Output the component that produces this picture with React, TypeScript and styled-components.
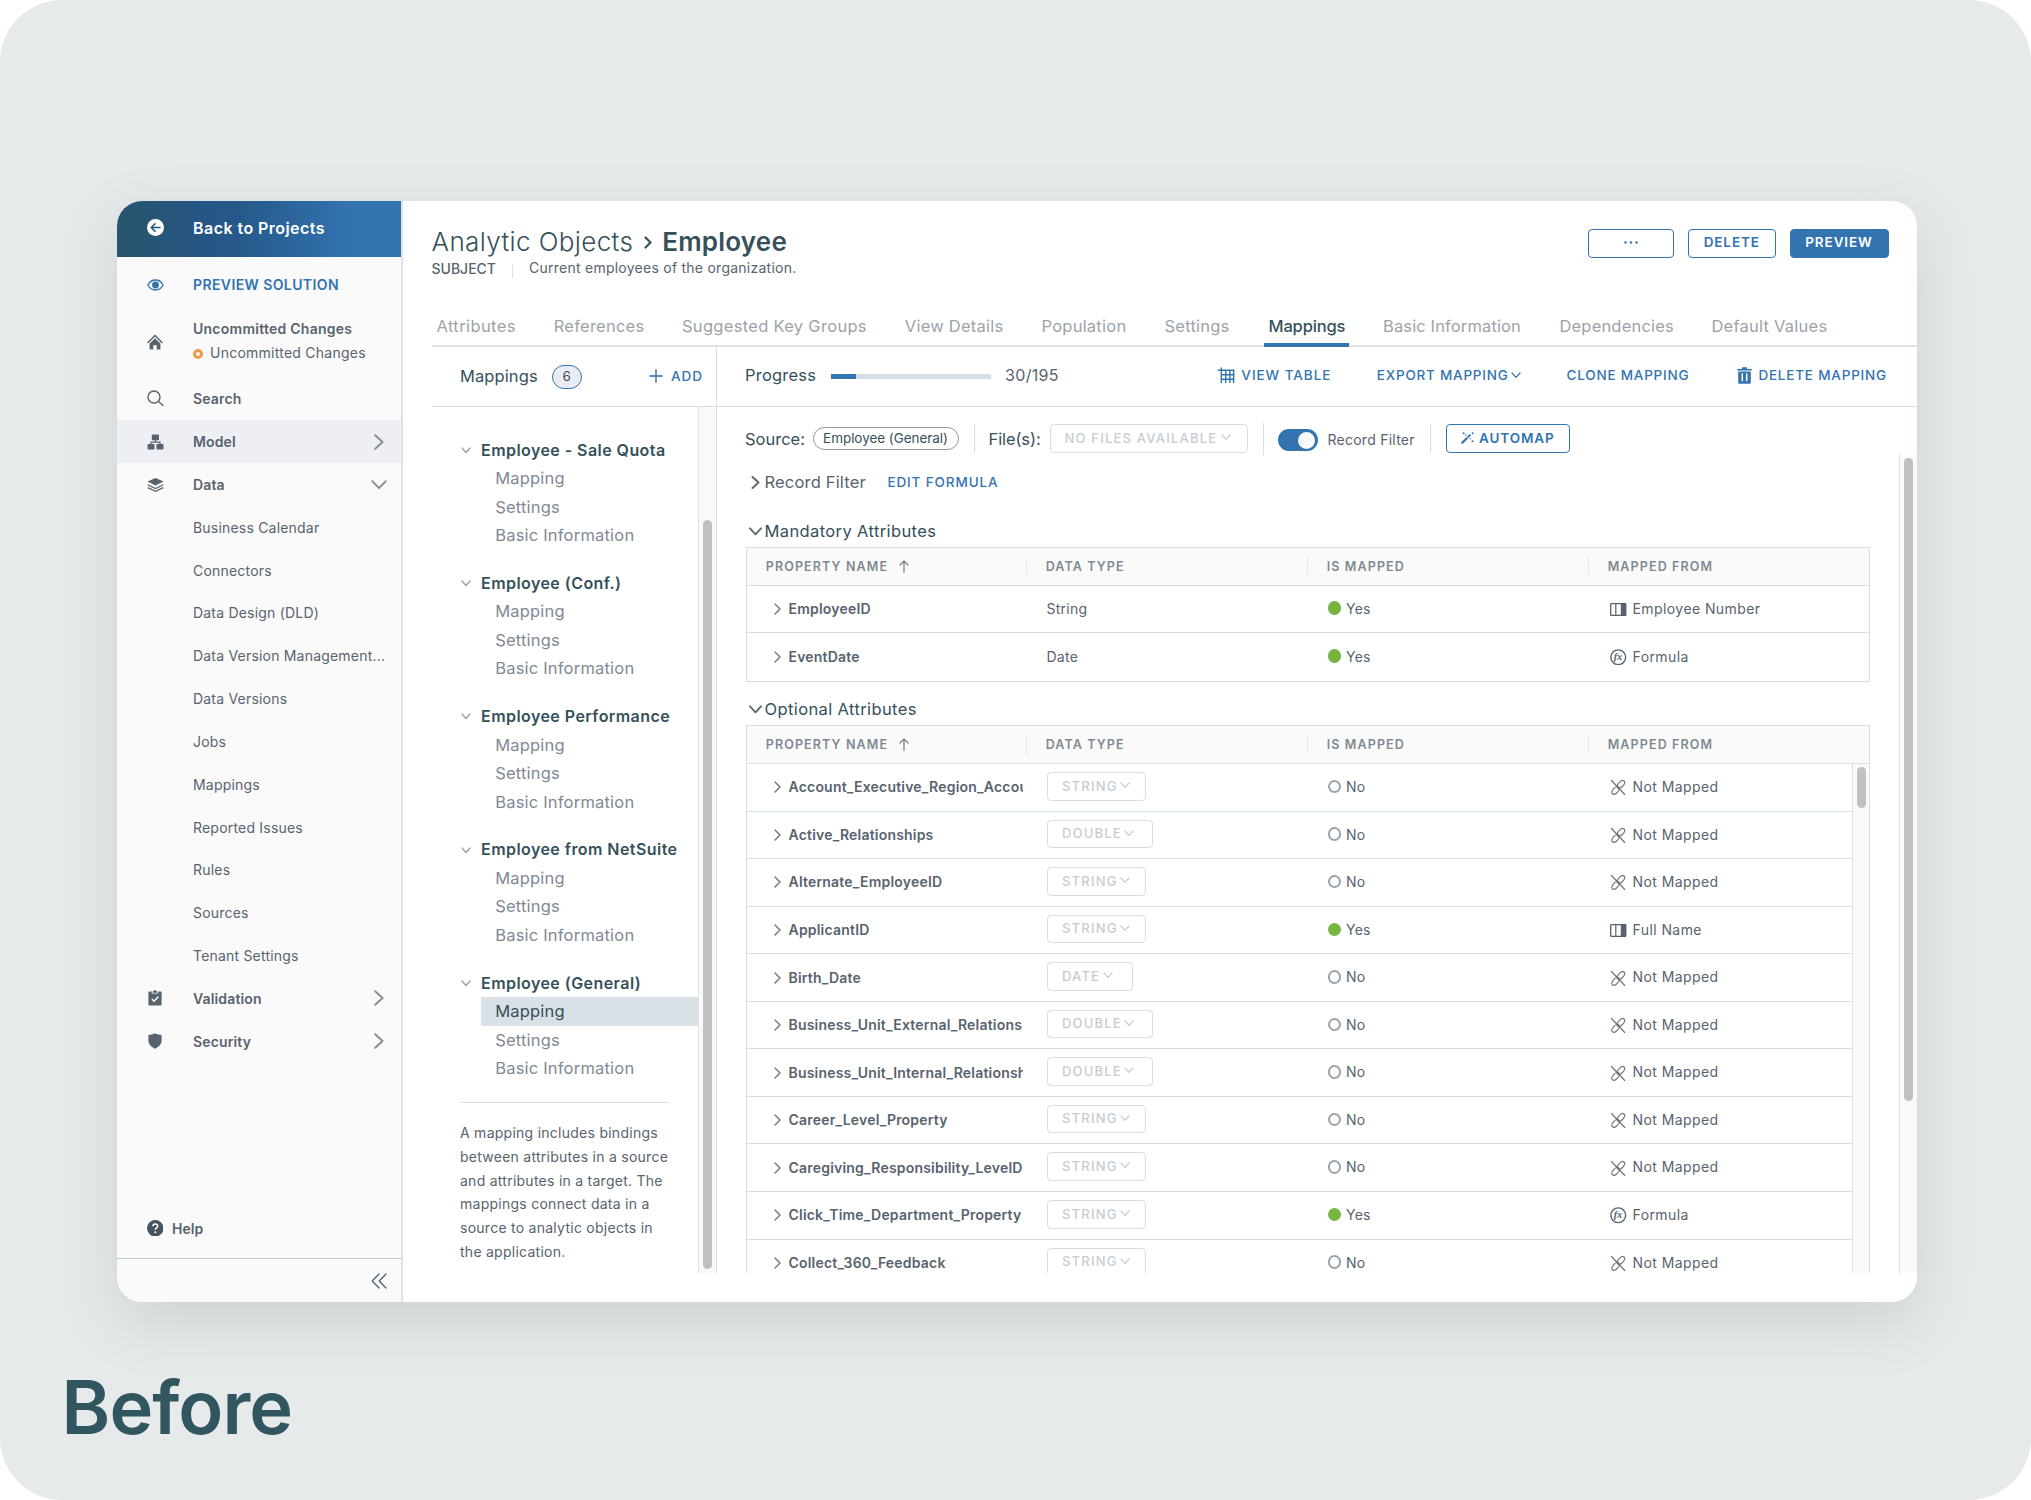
import React from 'react';
import styled, { createGlobalStyle, css } from 'styled-components';

const c = {
  blue: '#3273b0',
  dark: '#36505a',
  text: '#58636e',
  mute: '#7f8993',
  tab: '#9ca3a9',
  faint: '#c6cdd2',
  line: '#dce3e9',
  rule: '#d6dfe6',
  panel: '#fafafa',
  thumb: '#bfc0c2',
  green: '#78b540',
};

const Global = createGlobalStyle`
  *{box-sizing:border-box}
  html,body{margin:0;background:#fff}
  body{font-family:Inter,"Open Sans",sans-serif;font-size:14px;letter-spacing:.25px;color:${c.text};}
  h1,h2,p,ul{margin:0;padding:0;font-weight:inherit}
  button{font-family:inherit;padding:0;background:none;border:0}
  svg{display:block;flex:none}
`;

const Stage = styled.div`
  width: 2031px;
  height: 1500px;
  padding-top: 201px;
  background: #e6eaeb;
  border-radius: 62px;
  overflow: hidden;
`;
const Window = styled.div`
  display: flex;
  width: 1800px;
  height: 1101px;
  margin-left: 117px;
  background: #fff;
  border-radius: 25px;
  box-shadow: 0 20px 60px rgba(60, 76, 76, 0.15);
  overflow: hidden;
`;
const Caption = styled.h1`
  margin: 58px 0 0 61.5px;
  font-size: 74px;
  line-height: 94px;
  font-weight: 600;
  letter-spacing: -0.9px;
  color: #32565f;
`;

/* ---------- sidebar ---------- */
const Sidebar = styled.nav`
  display: flex;
  flex-direction: column;
  width: 286px;
  flex: none;
  background: ${c.panel};
  border-right: 2px solid ${c.line};
`;
const BackBar = styled.div`
  display: flex;
  align-items: center;
  height: 56px;
  padding-bottom: 3px;
  background: linear-gradient(90deg, #27556b 0%, #255685 30%, #265a8b 45%, #3273b0 82%);
  color: #fff;
  font-size: 16px;
  font-weight: 600;
  letter-spacing: 0.45px;
`;
const IconSlot = styled.span`
  display: flex;
  justify-content: center;
  width: 76px;
  flex: none;
`;
const PreviewLink = styled.div`
  display: flex;
  align-items: center;
  height: 56px;
  padding-bottom: 1px;
  color: ${c.blue};
  font-weight: 600;
  letter-spacing: 0.4px;
`;
const Commit = styled.div`
  display: flex;
  align-items: center;
  height: 64.5px;
  padding-bottom: 8px;
  svg {
    margin-top: 1px;
  }
`;
const CommitLines = styled.div`
  line-height: 24.5px;
`;
const CommitTitle = styled.div`
  font-weight: 600;
`;
const CommitState = styled.div`
  display: flex;
  align-items: center;
  gap: 7px;
`;
const Pending = styled.i`
  width: 10px;
  height: 10px;
  border: 3px solid #f2994a;
  border-radius: 50%;
`;
const NavItem = styled.div<{ $active?: boolean; $sub?: boolean }>`
  display: flex;
  align-items: center;
  height: 42.82px;
  padding-right: 12px;
  font-weight: ${(p) => (p.$sub ? 400 : 600)};
  letter-spacing: ${(p) => (p.$sub ? 0.2 : 0.15)}px;
  padding-left: ${(p) => (p.$sub ? 76 : 0)}px;
  background: ${(p) => (p.$active ? '#eeeff4' : 'transparent')};
`;
const NavChevron = styled.span`
  display: flex;
  justify-content: center;
  width: 20px;
  margin-left: auto;
  color: #858d95;
`;
const Help = styled.div`
  display: flex;
  align-items: center;
  gap: 9px;
  height: 58px;
  margin-top: auto;
  padding: 0 0 2px 29.5px;
  font-weight: 600;
  letter-spacing: 0;
`;
const Collapse = styled.div`
  display: flex;
  align-items: center;
  justify-content: flex-end;
  height: 44px;
  padding-right: 14.5px;
  border-top: 1px solid #bccad4;
  color: #4f6470;
`;

/* ---------- main ---------- */
const Main = styled.main`
  display: flex;
  flex-direction: column;
  flex: 1;
  min-width: 0;
  padding-left: 29px;
`;
const Header = styled.header`
  display: flex;
  justify-content: space-between;
  height: 106px;
  padding: 23px 28.5px 0 0;
`;
const Crumbs = styled.div`
  display: flex;
  align-items: center;
  height: 34px;
  margin-left: -0.5px;
  font-size: 26px;
  color: ${c.dark};
`;
const CrumbParent = styled.span`
  font-weight: 300;
  letter-spacing: 0.38px;
`;
const CrumbHere = styled.span`
  font-weight: 600;
  letter-spacing: 0.2px;
`;
const CrumbArrow = styled.span`
  display: flex;
  margin: 3px 10.5px 0 10.5px;
`;
const Subject = styled.div`
  display: flex;
  align-items: center;
  height: 20px;
`;
const SubjectTag = styled.span`
  font-weight: 500;
  letter-spacing: 0;
  width: 80.5px;
  margin-left: -0.5px;
`;
const SubjectText = styled.span`
  padding-left: 16px;
  line-height: 20px;
`;
const Tick = styled.i`
  width: 1px;
  height: 14px;
  margin-top: 5px;
  background: ${c.line};
`;
const Actions = styled.div`
  display: flex;
  gap: 14px;
  padding-top: 5px;
`;
const Button = styled.button<{ $w: number; $solid?: boolean }>`
  display: flex;
  align-items: center;
  justify-content: center;
  gap: 5px;
  width: ${(p) => p.$w}px;
  height: 28.5px;
  padding-bottom: 2px;
  border: 1.3px solid ${c.blue};
  border-radius: 4px;
  font-size: 13.5px;
  font-weight: 600;
  letter-spacing: 0.9px;
  color: ${(p) => (p.$solid ? '#fff' : c.blue)};
  background: ${(p) => (p.$solid ? c.blue : '#fff')};
`;
const Tabs = styled.div`
  display: flex;
  gap: 14px;
  height: 40px;
  border-bottom: 2px solid ${c.line};
  font-size: 16.5px;
`;
const Tab = styled.div<{ $w: number; $on?: boolean; $ls?: number }>`
  width: ${(p) => p.$w}px;
  height: 40px;
  padding-left: 4.5px;
  line-height: 39px;
  white-space: nowrap;
  letter-spacing: ${(p) => p.$ls ?? 0.24}px;
  color: ${c.tab};
  ${(p) =>
    p.$on &&
    css`
      margin-right: 15.5px;
      color: ${c.dark};
      font-weight: 500;
      border-bottom: 4px solid ${c.blue};
    `}
`;
const Body = styled.div`
  display: flex;
  height: 926px;
`;

/* mappings list */
const ListPane = styled.aside`
  width: 285px;
  flex: none;
  border-right: 1.3px solid ${c.rule};
`;
const ListHead = styled.div`
  display: flex;
  align-items: center;
  height: 60px;
  padding: 0 13px 2px 28px;
  border-bottom: 1px solid ${c.rule};
  color: ${c.dark};
  font-size: 16.5px;
  letter-spacing: 0.1px;
`;
const Count = styled.span`
  width: 30px;
  height: 24px;
  margin: 2px 0 0 14px;
  border: 1.4px solid ${c.blue};
  border-radius: 12px;
  background: #e9edf3;
  font-size: 13.5px;
  line-height: 21px;
  text-align: center;
`;
const Add = styled.button`
  display: flex;
  align-items: center;
  gap: 8px;
  margin-left: auto;
  color: ${c.blue};
  font-size: 13.5px;
  font-weight: 500;
  letter-spacing: 1px;
`;
const ListBody = styled.div`
  display: flex;
  height: 866px;
`;
const Tree = styled.div`
  flex: 1;
  padding: 28.8px 0 0 28px;
  overflow: hidden;
`;
const Group = styled.div`
  margin-bottom: 19.2px;
  font-size: 16px;
  line-height: 28.5px;
`;
const GroupTitle = styled.div`
  display: flex;
  align-items: center;
  height: 28.5px;
  color: ${c.dark};
  font-weight: 600;
  letter-spacing: 0.44px;
  white-space: nowrap;
  svg {
    margin: 1px 10px 0 1px;
    color: #98a0a8;
  }
`;
const Leaf = styled.div<{ $on?: boolean }>`
  height: 28.5px;
  margin-left: 21px;
  padding-left: 14.2px;
  font-size: 16.5px;
  letter-spacing: 0.2px;
  color: ${(p) => (p.$on ? c.dark : c.mute)};
  background: ${(p) => (p.$on ? '#d9e0e6' : 'transparent')};
`;
const Note = styled.p`
  width: 209px;
  padding-top: 18.5px;
  border-top: 1px solid ${c.rule};
  line-height: 23.65px;
  letter-spacing: 0.26px;
  white-space: pre-line;
`;
const Track = styled.div<{ $w: number; $top?: number; $pad: number }>`
  width: ${(p) => p.$w}px;
  flex: none;
  margin-top: ${(p) => p.$top ?? 0}px;
  padding: ${(p) => p.$pad}px 0 0 4px;
  border-left: 1px solid ${c.line};
  background: ${c.panel};
`;
const Thumb = styled.div<{ $h: number }>`
  width: 9.5px;
  height: ${(p) => p.$h}px;
  margin-left: -0.5px;
  border-radius: 5px;
  background: ${c.thumb};
`;

/* detail pane */
const Detail = styled.section`
  flex: 1;
  min-width: 0;
`;
const Toolbar = styled.div`
  display: flex;
  align-items: center;
  height: 60px;
  padding: 0 30px 3px 28px;
  border-bottom: 1px solid ${c.rule};
`;
const Label = styled.span<{ $light?: boolean; $ls?: number }>`
  font-size: ${(p) => (p.$light ? 16 : 16.5)}px;
  color: ${(p) => (p.$light ? c.text : c.dark)};
  letter-spacing: ${(p) => p.$ls ?? 0.1}px;
`;
const Progress = styled.div`
  width: 160px;
  height: 5px;
  margin: 2px 14px 0 15px;
  background: ${c.rule};
`;
const ProgressFill = styled.div`
  height: 100%;
  background: ${c.blue};
`;
const ToolLinks = styled.div`
  display: flex;
  gap: 45.5px;
  margin-left: auto;
`;
const ToolLink = styled.button<{ $ls?: number; $gap?: number; $mr?: number }>`
  display: flex;
  align-items: center;
  gap: ${(p) => p.$gap ?? 6}px;
  margin-right: ${(p) => p.$mr ?? 0}px;
  color: ${c.blue};
  font-size: 13.5px;
  font-weight: 500;
  letter-spacing: ${(p) => p.$ls ?? 0.8}px;
  white-space: nowrap;
`;
const Scroller = styled.div`
  display: flex;
  height: 866px;
`;
const Content = styled.div`
  flex: 1;
  min-width: 0;
  height: 866px;
  padding-left: 29px;
  overflow: hidden;
`;
const Controls = styled.div`
  display: flex;
  align-items: center;
  height: 63px;
  ${Label} {
    margin-top: -2px;
  }
`;
const SourceLabel = styled.span`
  width: 67.5px;
  margin-left: -1px;
`;
const FilesLabel = styled.span`
  width: 61px;
`;
const Pill = styled.span`
  width: 146px;
  height: 23px;
  border: 1.2px solid #8f989f;
  border-radius: 12px;
  color: ${c.dark};
  font-size: 13.5px;
  line-height: 20px;
  letter-spacing: -0.05px;
  text-align: center;
`;
const Rule = styled.i<{ $m: string; $h?: number }>`
  width: 1px;
  height: ${(p) => p.$h ?? 29}px;
  margin: ${(p) => p.$m};
  background: ${c.rule};
`;
const Select = styled.span<{ $w: number; $gap?: number }>`
  display: flex;
  align-items: center;
  gap: ${(p) => p.$gap ?? 2.5}px;
  width: ${(p) => p.$w}px;
  height: 28.5px;
  padding: 0 0 1.5px 14px;
  border: 1.2px solid #d8dee2;
  border-radius: 4px;
  color: ${c.faint};
  font-size: 13px;
  font-weight: 500;
  letter-spacing: 1.2px;
  white-space: nowrap;
`;
const Toggle = styled.span`
  display: flex;
  justify-content: flex-end;
  align-items: center;
  width: 40px;
  height: 21.5px;
  margin-top: 3px;
  padding-right: 2.5px;
  border-radius: 11px;
  background: ${c.blue};
`;
const Knob = styled.i`
  width: 17px;
  height: 17px;
  border-radius: 50%;
  background: ${c.panel};
`;
const ToggleLabel = styled.span`
  margin: 2px 0 0 10px;
`;
const FilterRow = styled.div`
  display: flex;
  align-items: center;
  height: 26px;
  margin-top: -1px;
  padding-left: 1px;
  font-size: 16.5px;
  letter-spacing: 0.18px;
`;
const Gutter = styled.span`
  display: flex;
  width: 17.5px;
  padding-left: 3.500px;
  color: #5b666f;
`;
const FormulaLink = styled.button`
  margin-left: 21.5px;
  color: ${c.blue};
  font-size: 13.5px;
  font-weight: 500;
  letter-spacing: 0.88px;
`;
const SectionTitle = styled.h2<{ $top: number }>`
  display: flex;
  align-items: center;
  height: 23px;
  margin-top: ${(p) => p.$top}px;
  padding-left: 2.5px;
  color: ${c.dark};
  font-size: 16.5px;
  letter-spacing: 0.38px;
  ${Gutter} {
    width: 12px;
    padding-left: 0;
    margin: 1px 4px 0 0;
  }
`;
const Table = styled.div`
  width: 1124px;
  margin-top: 4.5px;
  border: 1.3px solid ${c.rule};
`;
const cols = css`
  display: grid;
  grid-template-columns: 280px 281px 281px 1fr;
  align-items: center;
`;
const HeadRow = styled.div`
  ${cols}
  height: 38px;
  background: ${c.panel};
  border-bottom: 1.3px solid ${c.rule};
`;
const HeadCell = styled.div`
  display: flex;
  align-items: center;
  gap: 10.5px;
  height: 18px;
  padding: 0 0 0 18.7px;
  border-right: 1px solid #e3e6ec;
  color: ${c.mute};
  font-size: 12.5px;
  font-weight: 600;
  letter-spacing: 1.13px;
  &:last-child {
    border-right: 0;
  }
`;
const TableBody = styled.div`
  display: flex;
`;
const Rows = styled.div`
  flex: 1;
  min-width: 0;
`;
const Row = styled.div`
  ${cols}
  height: 47.55px;
  border-bottom: 1.2px solid ${c.rule};
`;
const MandatoryRows = styled(Rows)`
  ${Row}:last-child {
    border-bottom: 0;
  }
`;
const NameCell = styled.div`
  display: flex;
  align-items: center;
  gap: 7.5px;
  width: 276px;
  padding: 0 0 1px 27px;
  font-weight: 600;
  font-size: 14px;
  letter-spacing: 0.2px;
  white-space: nowrap;
  overflow: hidden;
  svg {
    margin-top: 1px;
    color: #737d86;
  }
`;
const TypeCell = styled.div<{ $plain?: boolean }>`
  padding-left: ${(p) => (p.$plain ? 19.5 : 20)}px;
  padding-bottom: ${(p) => (p.$plain ? 1 : 2)}px;
`;
const StateCell = styled.div`
  display: flex;
  align-items: center;
  gap: 5px;
  padding: 0 0 1.5px 19.5px;
`;
const Dot = styled.i<{ $on: boolean }>`
  width: 13.5px;
  height: 13.5px;
  border-radius: 50%;
  border: ${(p) => (p.$on ? 0 : '2px solid #9aa3aa')};
  background: ${(p) => (p.$on ? c.green : 'transparent')};
`;
const SourceCell = styled.div`
  display: flex;
  align-items: center;
  gap: 6px;
  padding: 0 0 1.5px 21px;
  letter-spacing: 0.42px;
  svg {
    margin-top: 2px;
  }
`;

/* ---------- icons ---------- */
const Stroke = ({ w, h, d, s = 1.5 }: { w: number; h: number; d: string; s?: number }) => (
  <svg width={w} height={h} viewBox={`0 0 ${w} ${h}`} fill="none" stroke="currentColor" strokeWidth={s} strokeLinecap="round" strokeLinejoin="round">
    <path d={d} />
  </svg>
);
const ChevR = () => <Stroke w={10} h={16} s={1.9} d="M1.2 1.200 8.600 8 1.200 14.800" />;
const ChevD = () => <Stroke w={16} h={10} s={1.9} d="M1.200 1.200 8 8.200 14.800 1.200" />;
const RowChev = () => <Stroke w={7} h={12} s={1.5} d="M1 1 6 6 1 11" />;
const SmallDown = () => <Stroke w={10} h={7} s={1.2} d="M1 1 5 5.300 9 1" />;
const BackIcon = () => (
  <svg width="17" height="17" viewBox="0 0 17 17">
    <circle cx="8.5" cy="8.5" r="8.5" fill="#fff" />
    <path d="M13 8.5H4.500M8 4.800 4.200 8.500 8 12.200" fill="none" stroke="#24557f" strokeWidth="1.600" strokeLinecap="round" strokeLinejoin="round" />
  </svg>
);
const EyeIcon = () => (
  <svg width="17" height="12" viewBox="0 0 17 12">
    <path d="M.9 6C2.600 2.700 5.400 1 8.500 1s5.900 1.700 7.600 5c-1.700 3.300-4.500 5-7.600 5S2.600 9.300.9 6Z" fill="none" stroke={c.blue} strokeWidth="1.300" />
    <circle cx="8.500" cy="6" r="3.400" fill={c.blue} />
  </svg>
);
const HomeIcon = () => (
  <svg width="16" height="16" viewBox="0 0 16 16">
    <path d="M1 8.500 8 1.500l7 7" fill="none" stroke={c.text} strokeWidth="1.500" strokeLinecap="round" strokeLinejoin="round" />
    <path d="m8 4.200 5.400 5.300v6H9.700v-4.300H6.300v4.300H2.600v-6Z" fill={c.text} />
  </svg>
);
const SearchIcon = () => (
  <svg width="17" height="17" viewBox="0 0 17 17" fill="none" stroke={c.text} strokeWidth="1.400" strokeLinecap="round">
    <circle cx="7" cy="7" r="6" />
    <path d="m11.500 11.500 4.500 4" />
  </svg>
);
const TreeIcon = () => (
  <svg width="17" height="16" viewBox="0 0 17 16" fill={c.text}>
    <rect x="4.800" y=".5" width="7.200" height="5.800" rx=".8" />
    <rect x=".5" y="10" width="7" height="5.500" rx=".8" />
    <rect x="9.500" y="10" width="7" height="5.500" rx=".8" />
    <path d="M8.500 6v2.200M4 10.500V8.200h9v2.300" fill="none" stroke={c.text} strokeWidth="1.200" />
  </svg>
);
const LayersIcon = () => (
  <svg width="17" height="14" viewBox="0 0 17 14">
    <path d="M8.500 0 16.500 3.600l-8 3.800-8-3.800Z" fill={c.text} />
    <path d="m.7 6.800 7.800 3.700 7.800-3.700M.7 9.600l7.800 3.700 7.800-3.700" fill="none" stroke={c.text} strokeWidth="1.200" />
  </svg>
);
const ClipboardIcon = () => (
  <svg width="14" height="16" viewBox="0 0 14 16">
    <path d="M1.200 1.500h2.600V3.500h6.400v-2h2.600a.8.8 0 0 1 .8.8v12.400a.8.800 0 0 1-.8.8H1.200a.8.8 0 0 1-.8-.8V2.300a.8.8 0 0 1 .8-.8Z" fill={c.text} />
    <path d="M4.600 1.300h1.200a1.200 1.200 0 0 1 2.400 0h1.200v1.400H4.600Z" fill={c.text} />
    <path d="m3.800 8.900 2.300 2.300 4.200-4.400" fill="none" stroke="#fff" strokeWidth="1.400" />
  </svg>
);
const ShieldIcon = () => (
  <svg width="14" height="16" viewBox="0 0 14 16">
    <path d="M7 .3c2 1.200 4.200 1.700 6.600 1.700v5.300c0 3.800-2.500 6.600-6.600 8.400C2.900 13.900.4 11.100.4 7.300V2C2.800 2 5 1.500 7 .3Z" fill={c.text} />
  </svg>
);
const HelpIcon = () => (
  <svg width="16.500" height="16.500" viewBox="0 0 16 16">
    <circle cx="8" cy="8" r="8" fill="#44555f" />
    <path d="M5.700 6.100c0-1.400 1-2.200 2.300-2.200s2.300.8 2.300 2c0 1.700-2.200 1.800-2.200 3.500" fill="none" stroke="#fff" strokeWidth="1.400" />
    <circle cx="8.100" cy="11.900" r=".95" fill="#fff" />
  </svg>
);
const GridIcon = () => (
  <svg width="17" height="17" viewBox="0 0 17 17" fill="none" stroke={c.blue} strokeWidth="1.400">
    <path d="M0 3.300h16.500M3.300 7.800H16.500M3.300 12.300H16.500M3.300.5V16M7.700 3v13M11.900 3v13M15.600 3v13" />
  </svg>
);
const TrashIcon = () => (
  <svg width="15" height="17" viewBox="0 0 15 17">
    <path d="M.3 2h14.400v1.400H.3ZM5 .3h5V2H5ZM1.200 4.600h12.600v11.200a1 1 0 0 1-1 1H2.200a1 1 0 0 1-1-1Z" fill={c.blue} />
    <path d="M5.300 6.300v8M9.700 6.300v8" stroke="#fff" strokeWidth="1.500" />
  </svg>
);
const WandIcon = () => (
  <svg width="13" height="12" viewBox="0 0 13 12" fill={c.blue}>
    <path d="M1.300 10.700 5.800 6.200" stroke={c.blue} strokeWidth="2.200" strokeLinecap="round" />
    <path d="m7.300 4.700 1.500-1.500" stroke={c.blue} strokeWidth="2" strokeLinecap="round" />
    <circle cx="2.600" cy="1.200" r="1" />
    <circle cx="4.600" cy="3" r=".7" />
    <circle cx="11.600" cy="1.200" r="1" />
    <circle cx="9.600" cy="6.600" r=".7" />
    <circle cx="11.500" cy="9.300" r="1" />
  </svg>
);
const ArrowUp = () => <Stroke w={10} h={13} s={1.4} d="M5 12.300V1M1 5 5 1l4 4" />;
const ColumnIcon = () => (
  <svg width="16.500" height="13" viewBox="0 0 16.500 13">
    <rect x=".7" y=".7" width="15.100" height="11.600" rx=".6" fill="#fff" stroke={c.text} strokeWidth="1.300" />
    <path d="M5.800.5v12" stroke={c.text} strokeWidth="1.200" />
    <path d="M10.800.5h5.200v12h-5.200Z" fill={c.text} />
  </svg>
);
const FormulaIcon = () => (
  <svg width="16.500" height="16.500" viewBox="0 0 16.500 16.500">
    <circle cx="8.250" cy="8.250" r="7.400" fill="none" stroke={c.text} strokeWidth="1.400" />
    <text x="7.900" y="11.300" textAnchor="middle" fontFamily="Liberation Serif, serif" fontStyle="italic" fontWeight="700" fontSize="10.500" letterSpacing="-.3" fill={c.text}>
      fx
    </text>
  </svg>
);
const UnlinkIcon = () => (
  <svg width="16.500" height="16.500" viewBox="0 0 16.500 16.500" fill="none" stroke="#69737c" strokeWidth="1.150" strokeLinecap="round">
    <path d="M1.500 1.500 14.700 15.500" />
    <ellipse cx="10.900" cy="5.500" rx="4.700" ry="2.600" transform="rotate(-48 10.900 5.500)" />
    <ellipse cx="5.600" cy="11.300" rx="4.700" ry="2.600" transform="rotate(-48 5.600 11.300)" />
  </svg>
);

/* ---------- data ---------- */
const dataItems = ['Business Calendar', 'Connectors', 'Data Design (DLD)', 'Data Version Management...', 'Data Versions', 'Jobs', 'Mappings', 'Reported Issues', 'Rules', 'Sources', 'Tenant Settings'];

const tabs: { t: string; w: number; on?: boolean; ls?: number }[] = [
  { t: 'Attributes', w: 103.2, ls: 0.4 },
  { t: 'References', w: 114.3 },
  { t: 'Suggested Key Groups', w: 208.8, ls: 0.3 },
  { t: 'View Details', w: 122.7 },
  { t: 'Population', w: 109 },
  { t: 'Settings', w: 90 },
  { t: 'Mappings', w: 85, on: true, ls: -0.15 },
  { t: 'Basic Information', w: 162.5, ls: 0.13 },
  { t: 'Dependencies', w: 138, ls: 0.18 },
  { t: 'Default Values', w: 140 },
];
const groups = ['Employee - Sale Quota', 'Employee (Conf.)', 'Employee Performance', 'Employee from NetSuite', 'Employee (General)'];
const leaves = ['Mapping', 'Settings', 'Basic Information'];

type Attr = { name: string; type: string; from?: string; kind?: 'column' | 'formula' };
const mandatory: Attr[] = [
  { name: 'EmployeeID', type: 'String', from: 'Employee Number', kind: 'column' },
  { name: 'EventDate', type: 'Date', from: 'Formula', kind: 'formula' },
];
const optional: Attr[] = [
  { name: 'Account_Executive_Region_Account', type: 'STRING' },
  { name: 'Active_Relationships', type: 'DOUBLE' },
  { name: 'Alternate_EmployeeID', type: 'STRING' },
  { name: 'ApplicantID', type: 'STRING', from: 'Full Name', kind: 'column' },
  { name: 'Birth_Date', type: 'DATE' },
  { name: 'Business_Unit_External_Relations', type: 'DOUBLE' },
  { name: 'Business_Unit_Internal_Relationships', type: 'DOUBLE' },
  { name: 'Career_Level_Property', type: 'STRING' },
  { name: 'Caregiving_Responsibility_LevelD', type: 'STRING' },
  { name: 'Click_Time_Department_Property', type: 'STRING', from: 'Formula', kind: 'formula' },
  { name: 'Collect_360_Feedback', type: 'STRING' },
];
const typeWidth: Record<string, number> = { STRING: 99, DOUBLE: 105.5, DATE: 85.5 };

const TableHead = () => (
  <HeadRow>
    <HeadCell>
      PROPERTY NAME <ArrowUp />
    </HeadCell>
    <HeadCell>DATA TYPE</HeadCell>
    <HeadCell>IS MAPPED</HeadCell>
    <HeadCell>MAPPED FROM</HeadCell>
  </HeadRow>
);
const AttrRow = ({ a, plain }: { a: Attr; plain?: boolean }) => (
  <Row>
    <NameCell>
      <RowChev />
      {a.name}
    </NameCell>
    <TypeCell $plain={plain}>
      {plain ? (
        a.type
      ) : (
        <Select $w={typeWidth[a.type]}>
          {a.type}
          <SmallDown />
        </Select>
      )}
    </TypeCell>
    <StateCell>
      <Dot $on={!!a.from} />
      {a.from ? 'Yes' : 'No'}
    </StateCell>
    <SourceCell>
      {a.kind === 'column' ? <ColumnIcon /> : a.kind === 'formula' ? <FormulaIcon /> : <UnlinkIcon />}
      {a.from ?? 'Not Mapped'}
    </SourceCell>
  </Row>
);

export default function App() {
  return (
    <>
      <Global />
      <Stage>
        <Window>
          <Sidebar>
            <BackBar>
              <IconSlot><BackIcon /></IconSlot>
              Back to Projects
            </BackBar>
            <PreviewLink>
              <IconSlot><EyeIcon /></IconSlot>
              PREVIEW SOLUTION
            </PreviewLink>
            <Commit>
              <IconSlot><HomeIcon /></IconSlot>
              <CommitLines>
                <CommitTitle>Uncommitted Changes</CommitTitle>
                <CommitState>
                  <Pending />
                  Uncommitted Changes
                </CommitState>
              </CommitLines>
            </Commit>
            <NavItem>
              <IconSlot><SearchIcon /></IconSlot>
              Search
            </NavItem>
            <NavItem $active>
              <IconSlot><TreeIcon /></IconSlot>
              Model
              <NavChevron><ChevR /></NavChevron>
            </NavItem>
            <NavItem>
              <IconSlot><LayersIcon /></IconSlot>
              Data
              <NavChevron><ChevD /></NavChevron>
            </NavItem>
            {dataItems.map((t) => (
              <NavItem key={t} $sub>{t}</NavItem>
            ))}
            <NavItem>
              <IconSlot><ClipboardIcon /></IconSlot>
              Validation
              <NavChevron><ChevR /></NavChevron>
            </NavItem>
            <NavItem>
              <IconSlot><ShieldIcon /></IconSlot>
              Security
              <NavChevron><ChevR /></NavChevron>
            </NavItem>
            <Help>
              <HelpIcon />
              Help
            </Help>
            <Collapse>
              <Stroke w={16} h={16} s={1.3} d="M8 1 1.200 8 8 15M15 1 8.200 8 15 15" />
            </Collapse>
          </Sidebar>

          <Main>
            <Header>
              <div>
                <Crumbs>
                  <CrumbParent>Analytic Objects</CrumbParent>
                  <CrumbArrow><Stroke w={8} h={13} s={2.2} d="M1.500 1.500 6.500 6.500 1.500 11.500" /></CrumbArrow>
                  <CrumbHere>Employee</CrumbHere>
                </Crumbs>
                <Subject>
                  <SubjectTag>SUBJECT</SubjectTag>
                  <Tick />
                  <SubjectText>Current employees of the organization.</SubjectText>
                </Subject>
              </div>
              <Actions>
                <Button $w={86}>
                  <svg width="14" height="3" viewBox="0 0 14 3" fill={c.blue}>
                    <circle cx="1.500" cy="1.500" r="1.200" />
                    <circle cx="7" cy="1.500" r="1.200" />
                    <circle cx="12.500" cy="1.500" r="1.200" />
                  </svg>
                </Button>
                <Button $w={87.5}>DELETE</Button>
                <Button $w={99} $solid>PREVIEW</Button>
              </Actions>
            </Header>
            <Tabs>
              {tabs.map((t) => (
                <Tab key={t.t} $w={t.w} $on={t.on} $ls={t.ls}>{t.t}</Tab>
              ))}
            </Tabs>
            <Body>
              <ListPane>
                <ListHead>
                  Mappings
                  <Count>6</Count>
                  <Add>
                    <Stroke w={14} h={14} s={1.4} d="M7 .8v12.400M.8 7h12.400" />
                    ADD
                  </Add>
                </ListHead>
                <ListBody>
                  <Tree>
                    {groups.map((g, i) => (
                      <Group key={g}>
                        <GroupTitle>
                          <Stroke w={10} h={7} s={1.3} d="M1 1 5 5.500 9 1" />
                          {g}
                        </GroupTitle>
                        {leaves.map((l, j) => (
                          <Leaf key={l} $on={i === 4 && j === 0}>{l}</Leaf>
                        ))}
                      </Group>
                    ))}
                    <Note>{'A mapping includes bindings\nbetween attributes in a source\nand attributes in a target. The\nmappings connect data in a\nsource to analytic objects in\nthe application.'}</Note>
                  </Tree>
                  <Track $w={18} $pad={113}>
                    <Thumb $h={749} />
                  </Track>
                </ListBody>
              </ListPane>

              <Detail>
                <Toolbar>
                  <Label $ls={0.2}>Progress</Label>
                  <Progress>
                    <ProgressFill style={{ width: `${(30 / 195) * 100}%` }} />
                  </Progress>
                  <Label $light $ls={0.3}>30/195</Label>
                  <ToolLinks>
                    <ToolLink $ls={0.96}><GridIcon />VIEW TABLE</ToolLink>
                    <ToolLink $ls={0.77} $gap={2.5}>EXPORT MAPPING<SmallDown /></ToolLink>
                    <ToolLink $ls={0.78} $mr={2.5}>CLONE MAPPING</ToolLink>
                    <ToolLink><TrashIcon />DELETE MAPPING</ToolLink>
                  </ToolLinks>
                </Toolbar>
                <Scroller>
                  <Content>
                    <Controls>
                      <SourceLabel><Label $ls={0}>Source:</Label></SourceLabel>
                      <Pill>Employee (General)</Pill>
                      <Rule $m="0 14px 0 15px" />
                      <FilesLabel><Label $ls={-0.1}>File(s):</Label></FilesLabel>
                      <Select $w={198} $gap={4}>
                        NO FILES AVAILABLE
                        <SmallDown />
                      </Select>
                      <Rule $m="0 14px 0 15px" $h={32} />
                      <Toggle><Knob /></Toggle>
                      <ToggleLabel>Record Filter</ToggleLabel>
                      <Rule $m="0 15px 0 15px" />
                      <Button $w={124}>
                        <WandIcon />
                        AUTOMAP
                      </Button>
                    </Controls>
                    <FilterRow>
                      <Gutter><Stroke w={9} h={13} s={1.9} d="M1.500 1 7.500 6.500 1.500 12" /></Gutter>
                      Record Filter
                      <FormulaLink>EDIT FORMULA</FormulaLink>
                    </FilterRow>
                    <SectionTitle $top={24}>
                      <Gutter><Stroke w={13} h={9} s={1.8} d="M1 1.300 6.500 7.300 12 1.300" /></Gutter>
                      Mandatory Attributes
                    </SectionTitle>
                    <Table>
                      <TableHead />
                      <MandatoryRows>
                        {mandatory.map((a) => <AttrRow key={a.name} a={a} plain />)}
                      </MandatoryRows>
                    </Table>
                    <SectionTitle $top={16}>
                      <Gutter><Stroke w={13} h={9} s={1.8} d="M1 1.300 6.500 7.300 12 1.300" /></Gutter>
                      Optional Attributes
                    </SectionTitle>
                    <Table>
                      <TableHead />
                      <TableBody>
                        <Rows>
                          {optional.map((a) => <AttrRow key={a.name} a={a} />)}
                        </Rows>
                        <Track $w={17} $pad={3}>
                          <Thumb $h={41} />
                        </Track>
                      </TableBody>
                    </Table>
                  </Content>
                  <Track $w={18} $top={48} $pad={3}>
                    <Thumb $h={643} />
                  </Track>
                </Scroller>
              </Detail>
            </Body>
          </Main>
        </Window>
        <Caption>Before</Caption>
      </Stage>
    </>
  );
}
